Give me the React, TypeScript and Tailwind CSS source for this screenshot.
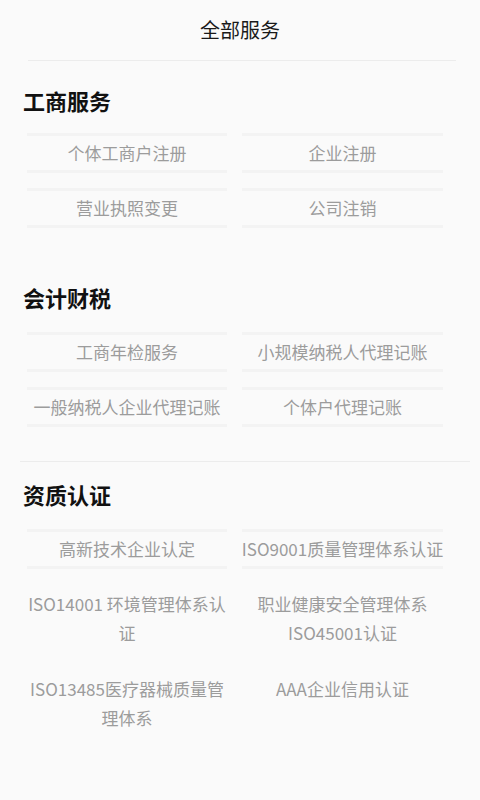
import React from 'react';

interface Section {
  title: string;
  items: string[][];
  pt: string;
  mt: string;
}

const sections: Section[] = [
  { title: '工商服务', pt: 'pt-[24px]', mt: 'mt-[10px]', items: [['个体工商户注册', '企业注册'], ['营业执照变更', '公司注销']] },
  { title: '会计财税', pt: 'pt-[47px]', mt: 'mt-[12px]', items: [['工商年检服务', '小规模纳税人代理记账'], ['一般纳税人企业代理记账', '个体户代理记账']] },
  {
    title: '资质认证',
    pt: 'pt-[17px]',
    mt: 'mt-[12px]',
    items: [
      ['高新技术企业认定', 'ISO9001质量管理体系认证'],
      ['ISO14001 环境管理体系认证', '职业健康安全管理体系ISO45001认证'],
      ['ISO13485医疗器械质量管理体系', 'AAA企业信用认证'],
    ],
  },
];

function Cell({ label, tall }: { label: string; tall: boolean }) {
  if (tall) {
    return (
      <div className="h-[85px] pt-[13px] text-center text-[17px] leading-[29px] text-[#9c9c9c]">{label}</div>
    );
  }
  return (
    <div className="flex h-[55px] items-center justify-center text-[17px] text-[#9c9c9c]">
      <div className="flex h-[40px] w-full items-center justify-center whitespace-nowrap border-y-[3px] border-[#f3f3f3]">
        {label}
      </div>
    </div>
  );
}

export default function App() {
  return (
    <div
      className="min-h-[800px] w-[480px] bg-[#fafafa]"
      style={{ fontFamily: '"Noto Sans CJK SC", "Noto Sans", sans-serif' }}
    >
      {/* Header */}
      <div className="flex h-[60px] items-center justify-center pb-[1px] text-[20px] text-[#1a1a1a]">全部服务</div>
      <div className="ml-[28px] mr-[24px] h-px bg-[#ececec]" />

      {sections.map((s, si) => (
        <React.Fragment key={s.title}>
          {si === 2 && <div className="ml-[20px] mr-[10px] mt-[27px] h-px bg-[#ececec]" />}
          <div className={s.pt}>
            <h2 className="h-[30px] pl-[23px] text-[22px] font-bold leading-[30px] text-[#111]">{s.title}</h2>
            <div className={'grid grid-cols-[200px_201px] gap-x-[15px] pl-[27px] ' + s.mt}>
              {s.items.map((row, ri) =>
                row.map(label => (
                  <Cell key={label} label={label} tall={si === 2 && ri > 0} />
                ))
              )}
            </div>
          </div>
        </React.Fragment>
      ))}
    </div>
  );
}
